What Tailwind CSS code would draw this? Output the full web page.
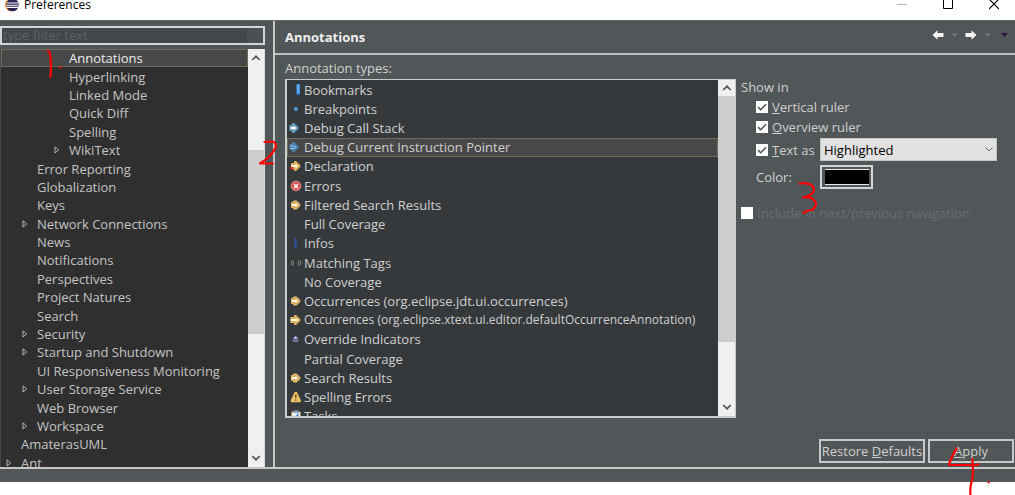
<!DOCTYPE html>
<html lang="en">
<head>
<meta charset="utf-8">
<title>Preferences</title>
<script src="https://cdn.jsdelivr.net/npm/@tailwindcss/browser@4"></script>
</head>
<body class="relative min-h-screen overflow-hidden bg-white font-['Open_Sans','Noto_Sans',sans-serif] text-[13px] leading-[18px] text-[#d0d0d0]">

<!-- icon symbols -->
<svg class="hidden" aria-hidden="true">
  <symbol id="exp" viewBox="0 0 6 8"><path d="M1 .8v6.200L4.600 4z" fill="none" stroke="#c4c4c4" stroke-width=".9"/></symbol>
  <symbol id="up" viewBox="0 0 10 6"><path d="M1.200 5L5 1.300 8.800 5" fill="none" stroke="#555" stroke-width="1.700"/></symbol>
  <symbol id="down" viewBox="0 0 10 6"><path d="M1.200 1L5 4.700 8.800 1" fill="none" stroke="#555" stroke-width="1.700"/></symbol>
  <symbol id="bookmark" viewBox="0 0 14 14"><path d="M8.500 1h3.500v11H8.500z" fill="#3f92e8"/><path d="M9.300 2h1.200v8H9.300z" fill="#7cc0ff"/><path d="M8.500 11H12v1H8.500z" fill="#1f5fb8"/></symbol>
  <symbol id="bp" viewBox="0 0 14 14"><circle cx="8" cy="7" r="2.300" fill="#3d7eae"/><circle cx="7.700" cy="6.700" r="1" fill="#7fb9e0"/></symbol>
  <symbol id="stack" viewBox="0 0 14 14"><path d="M2 4.500H4.500V2.500H6L10 6.300V7.700L6 11.500H4.500V9.500H2z" fill="#5d9cc6" stroke="#8dbad8" stroke-width=".7"/><path d="M2.500 6h3.300V4.700L8.500 7 5.800 9.300V8H2.500z" fill="#fff"/></symbol>
  <symbol id="ip" viewBox="0 0 14 14"><path d="M2 4.500H4.500V2.500H6L10 6.300V7.700L6 11.500H4.500V9.500H2z" fill="#3f7fb5" stroke="#5d93bd" stroke-width=".7"/><path d="M2 6h4.500L8.200 7 6.500 8.500H2.500" fill="none" stroke="#a5cbe4" stroke-width=".9"/></symbol>
  <symbol id="arrow" viewBox="0 0 14 14"><path d="M3.500 4.500H5.500V3H8.500L11.800 6V8L8.500 11H5.500V9.500H3.500z" fill="#d9a44c" stroke="#f0cf8c" stroke-width=".9"/><path d="M4 6h3.500V4.700L10.200 7 7.500 9.300V8H4z" fill="#fffbe6"/></symbol>
  <symbol id="decl" viewBox="0 0 14 14"><path d="M3.500 4.500H6.500V2.500H8L12 6.300V7.700L8 11.500H6.500V9.500H3.500z" fill="#d9a44c" stroke="#efc274" stroke-width=".9"/><path d="M3.500 6h4V4.500L10.300 7 7.500 9.500V8H3.500z" fill="#fffbe6"/><path d="M2 8h3v2.500H2z" fill="#e02a20"/></symbol>
  <symbol id="occ" viewBox="0 0 14 14"><path d="M2.800 4.500H6.500V2.500H8L12 6.300V7.700L8 11.500H6.500V9.500H2.800z" fill="#d9a44c" stroke="#efc274" stroke-width=".9"/><path d="M3 6h4.500V4.500L10.300 7 7.500 9.500V8H3z" fill="#fffbe6"/></symbol>
  <symbol id="err" viewBox="0 0 14 14"><circle cx="8" cy="7" r="4.800" fill="#d94848" stroke="#eda0a0" stroke-width=".9"/><path d="M6 4.900l4 4.300M10 4.900L6 9.200" stroke="#fff" stroke-width="1.500"/></symbol>
  <symbol id="info" viewBox="0 0 14 14"><path d="M6.500 2.500h2v2h-2zM6 5.500h2.500v5H9.500v1H5.800v-1h.9V6.500H6z" fill="#2f55b5"/></symbol>
  <symbol id="tags" viewBox="0 0 14 14"><path d="M4.200 4.500L3 7l1.200 2.500M4.800 4.500L5.500 7 4.800 9.500M10.800 4.500L10 7l.8 2.500M11.800 4.500L13 7l-1.200 2.500" fill="none" stroke="#9aa08c" stroke-width=".8"/></symbol>
  <symbol id="over" viewBox="0 0 14 14"><path d="M7.500 3.800L10 7H5z" fill="#dcd8f5" stroke="#8078b8" stroke-width=".9"/><path d="M4.500 9h6" stroke="#9a93d0" stroke-width="1.300"/></symbol>
  <symbol id="warn" viewBox="0 0 14 14"><path d="M7.800 3.200L11.500 10.800H4.100z" fill="#f6cf77" stroke="#efbf68" stroke-width="3" stroke-linejoin="round"/><path d="M7.800 4.500v3.600M7.800 9.200v1.500" stroke="#5b3d0c" stroke-width="1.300"/></symbol>
  <symbol id="task" viewBox="0 0 14 14"><path d="M3.500 3h9v10h-9z" fill="#e9f2fb" stroke="#b98b4e"/><path d="M5.500 1.500h5V4h-5z" fill="#8da2c8"/><path d="M5.500 7l1.800 2L10.500 5" fill="none" stroke="#2d72d9" stroke-width="1.500"/></symbol>
</svg>

<header class="flex h-5 items-start justify-between bg-white text-black">
  <div class="flex h-[10px] items-center gap-[5px] pl-[5px]">
    <svg class="size-[14px] shrink-0" viewBox="0 0 14 14"><circle cx="6.300" cy="7" r="6.300" fill="#f7941e"/><circle cx="7.500" cy="7" r="6.300" fill="#2c2255"/><path d="M1.500 5h12M1.200 7.200h12.500M1.500 9.400h12" stroke="#fff" stroke-width="1.100"/></svg>
    <h1 class="text-xs leading-4">Preferences</h1>
  </div>
  <div class="flex items-start gap-9 pr-4">
    <button aria-label="Minimize" class="h-[10px]"><svg class="h-[10px] w-[10px]" viewBox="0 0 10 10"><path d="M0 4.500h10" stroke="#b5b5b5"/></svg></button>
    <button aria-label="Maximize" class="h-[10px]"><svg class="h-[10px] w-[10px]" viewBox="0 0 10 10"><path d="M.5-2v10.500h9V-2" fill="none" stroke="#000"/></svg></button>
    <button aria-label="Close" class="h-[10px]"><svg class="h-[10px] w-[10px]" viewBox="0 0 10 10"><path d="M0-1l10 10M10-1L0 9" stroke="#000" stroke-width="1.100"/></svg></button>
  </div>
</header>

<div class="border-t border-[#62686a] bg-[#515658]">
  <main class="flex h-[448px] border-b-2 border-[#c8c8c6]">
    <!-- preference tree -->
    <nav class="flex w-[273px] shrink-0 flex-col gap-1 pt-[5px] pr-2" aria-label="Preference pages">
      <div class="flex h-[19px] shrink-0 border-2 border-[#d2d4d5] bg-[#42474a]">
        <input type="text" aria-label="Filter" placeholder="type filter text" class="w-0 flex-1 bg-transparent px-px text-[13px] leading-[15px] placeholder:text-[#5c6163] outline-none">
        <span class="w-4 bg-[#4b5053]"></span>
      </div>
      <div class="flex min-h-0 flex-1">
        <div class="min-w-0 flex-1 overflow-hidden border-l border-[#45494b] bg-[#2f2f2f]">
          <ul id="tree" class="flex h-[423px] flex-col leading-4"></ul>
        </div>
        <div class="flex w-[17px] flex-col items-center border-r border-[#dcdcdc] bg-[#f0f0f0]">
          <svg class="my-[6px] h-[6px] w-[10px] shrink-0"><use href="#up"/></svg>
          <div class="mt-[83px] h-[184px] w-full bg-[#cdcdcd]"></div>
          <svg class="mt-auto mb-[6px] h-[6px] w-[10px] shrink-0"><use href="#down"/></svg>
        </div>
      </div>
    </nav>

    <!-- page content -->
    <section class="flex min-w-0 flex-1 flex-col border-l-2 border-[#c8c8c6]">
      <div class="flex h-[34px] shrink-0 items-center justify-between border-b-2 border-[#bfc0c0] pr-[7px] pl-[10px]">
        <h2 class="font-bold text-[#f0f0f0]">Annotations</h2>
        <div class="flex items-center gap-[7px] pb-1">
          <button aria-label="Back"><svg class="h-[10px] w-3" viewBox="0 0 12 10"><path d="M.5 5L5.500.3V3H11.500V7H5.500V9.700z" fill="#f4f4f4"/></svg></button>
          <button aria-label="Back history"><svg class="h-[10px] w-[7px]" viewBox="0 0 7 10"><path d="M0 3.500h7L3.500 7z" fill="#73787a"/></svg></button>
          <button aria-label="Forward"><svg class="h-[10px] w-3" viewBox="0 0 12 10"><path d="M11.500 5L6.500.3V3H.5V7H6.500V9.700z" fill="#f4f4f4"/></svg></button>
          <button aria-label="Forward history"><svg class="h-[10px] w-[7px]" viewBox="0 0 7 10"><path d="M0 3.500h7L3.500 7z" fill="#73787a"/></svg></button>
          <button aria-label="Menu" class="pl-[3px]"><svg class="h-[10px] w-[7px]" viewBox="0 0 7 10"><path d="M0 3h7L3.500 7z" fill="#2c1245"/></svg></button>
        </div>
      </div>

      <div class="flex flex-col pl-[10px]">
        <h3 class="pt-1 pb-[2px] leading-[18px]">Annotation types:</h3>
        <div class="flex">
          <div class="flex h-[339px] w-[451px] shrink-0 border-2 border-t border-r border-[#c9cbcc] bg-[#35393c]">
            <div class="min-w-0 flex-1 overflow-hidden">
              <ul id="types" class="flex h-[346px] flex-col leading-4"></ul>
            </div>
            <div class="flex w-[17px] flex-col items-center bg-[#f0f0f0]">
              <svg class="my-[5px] h-[6px] w-[10px] shrink-0"><use href="#up"/></svg>
              <div class="h-[246px] w-full bg-[#cdcdcd]"></div>
              <svg class="mt-auto mb-[6px] h-[6px] w-[10px] shrink-0"><use href="#down"/></svg>
            </div>
          </div>
          <fieldset class="flex flex-col pl-[5px]">
            <legend class="sr-only">Show in</legend>
            <p class="leading-4">Show in</p>
            <div class="flex flex-col gap-[2px] pt-[3px] pl-[15px]">
              <label class="flex items-center gap-1"><input type="checkbox" checked class="sr-only"><svg class="size-3" viewBox="0 0 12 12"><path d="M0 0h12v12H0z" fill="#fff"/><path d="M2 6l2.700 2.800L10 3.200" fill="none" stroke="#4a4a4a" stroke-width="1.400"/></svg><span><u>V</u>ertical ruler</span></label>
              <label class="flex items-center gap-1"><input type="checkbox" checked class="sr-only"><svg class="size-3" viewBox="0 0 12 12"><path d="M0 0h12v12H0z" fill="#fff"/><path d="M2 6l2.700 2.800L10 3.200" fill="none" stroke="#4a4a4a" stroke-width="1.400"/></svg><span><u>O</u>verview ruler</span></label>
              <div class="grid grid-cols-[64px_177px] items-center gap-y-1">
                <label class="flex items-center gap-1"><input type="checkbox" checked class="sr-only"><svg class="size-3 shrink-0" viewBox="0 0 12 12"><path d="M0 0h12v12H0z" fill="#fff"/><path d="M2 6l2.700 2.800L10 3.200" fill="none" stroke="#4a4a4a" stroke-width="1.400"/></svg><span class="whitespace-nowrap"><u>T</u>ext as</span></label>
                <div class="grid items-center">
                  <select aria-label="Text as" class="col-start-1 row-start-1 h-[23px] appearance-none border border-[#c4c4c4] bg-[#e1e1e1] px-[3px] text-[13px] leading-[18px] text-black"><option>Highlighted</option></select>
                  <svg class="pointer-events-none col-start-1 row-start-1 mr-1 h-[5px] w-[8px] justify-self-end" viewBox="0 0 8 5"><path d="M.5.5L4 4 7.500.5" fill="none" stroke="#666"/></svg>
                </div>
                <label for="color">Color:</label>
                <button id="color" aria-label="Color" class="flex h-6 w-[53px] items-center justify-center border-2 border-[#d4d5d6]"><span class="h-4 w-11 border-y border-[#e8e8e8] bg-black"></span></button>
              </div>
            </div>
            <label class="flex items-center gap-1 pt-[15px] text-[#686d6f]"><input type="checkbox" disabled class="size-3 appearance-none bg-white">Include in next/previous navigation</label>
          </fieldset>
        </div>
      </div>

      <div class="mt-auto flex justify-end gap-[3px] pr-px pb-1">
        <button class="h-6 w-[106px] border-2 border-[#c6c8c9] leading-[18px] whitespace-nowrap">Restore <u>D</u>efaults</button>
        <button class="h-6 w-[86px] border-2 border-[#c6c8c9] leading-[18px]"><u>A</u>pply</button>
      </div>
    </section>
  </main>
  <div class="h-[13px]"></div>
</div>

<!-- handwritten step marks -->
<svg class="pointer-events-none absolute top-0 left-0 h-[495px] w-[1015px]" viewBox="0 0 1015 495" fill="none" stroke="#f00" stroke-width="2.200" stroke-linecap="round" stroke-linejoin="round">
  <path d="M48 51Q50 52 50.500 57Q51.500 66 50.500 77M60.300 67.500h.3"/>
  <path d="M264.500 142L272 141.500Q277 142 275.500 148Q271 157 260 163.500L273 163.500"/>
  <path d="M799.500 183.500Q808 182 812.500 186Q816 191 811 194.500Q807 197 803 197.300Q812 196.500 815.500 202Q817 207 812 210Q806 210.500 803.500 213"/>
  <path d="M956.500 448.500Q951 457 949 465L978 465V464M972.300 459Q973.500 471 972.500 479Q969.500 486 970.500 495M988.500 482.500h.3"/>
</svg>

<script>
  const tree = [
    ["Annotations", 2, 0], ["Hyperlinking", 2, 0], ["Linked Mode", 2, 0], ["Quick Diff", 2, 0], ["Spelling", 2, 0], ["WikiText", 2, 1],
    ["Error Reporting", 1, 0], ["Globalization", 1, 0], ["Keys", 1, 0], ["Network Connections", 1, 1], ["News", 1, 0], ["Notifications", 1, 0],
    ["Perspectives", 1, 0], ["Project Natures", 1, 0], ["Search", 1, 0], ["Security", 1, 1], ["Startup and Shutdown", 1, 1],
    ["UI Responsiveness Monitoring", 1, 0], ["User Storage Service", 1, 1], ["Web Browser", 1, 0], ["Workspace", 1, 1],
    ["AmaterasUML", 0, 0], ["Ant", 0, 1]
  ];
  const indent = ["pl-1", "pl-5", "pl-[52px]"];
  document.getElementById("tree").innerHTML = tree.map(([name, level, open], i) =>
    `<li class="flex min-h-0 flex-1 items-center gap-[9px] border ${indent[level]} ${i ? "border-transparent text-[#c4c4c4]" : "border-[#716c58] bg-[#484848] text-[#ececec]"}">` +
    `<svg class="h-2 w-[6px] shrink-0">${open ? '<use href="#exp"/>' : ""}</svg><span class="whitespace-nowrap">${name}</span></li>`).join("");

  const types = [
    ["Bookmarks", "bookmark"], ["Breakpoints", "bp"], ["Debug Call Stack", "stack"], ["Debug Current Instruction Pointer", "ip"],
    ["Declaration", "decl"], ["Errors", "err"], ["Filtered Search Results", "arrow"], ["Full Coverage", ""], ["Infos", "info"],
    ["Matching Tags", "tags"], ["No Coverage", ""], ["Occurrences (org.eclipse.jdt.ui.occurrences)", "arrow"],
    ["Occurrences (org.eclipse.xtext.ui.editor.defaultOccurrenceAnnotation)", "occ"], ["Override Indicators", "over"],
    ["Partial Coverage", ""], ["Search Results", "arrow"], ["Spelling Errors", "warn"], ["Tasks", "task"]
  ];
  // names too long for the column drop to the smaller text size
  document.getElementById("types").innerHTML = types.map(([name, icon], i) =>
    `<li class="flex min-h-0 flex-1 items-center gap-[2px] border ${i === 3 ? "border-[#716c58] bg-[#484848]" : "border-transparent"}">` +
    `<svg class="size-[14px] shrink-0">${icon ? `<use href="#${icon}"/>` : ""}</svg><span class="whitespace-nowrap ${name.length > 60 ? "text-xs leading-4" : ""}">${name}</span></li>`).join("");
</script>
</body>
</html>
